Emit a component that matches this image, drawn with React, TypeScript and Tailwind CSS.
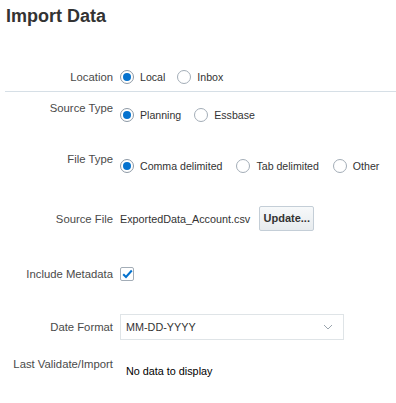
import React from "react";

const font = { fontFamily: '"Liberation Sans", Arial, sans-serif' };

function Radio({ checked, label }: { checked?: boolean; label: string }) {
  return (
    <div className="flex items-center whitespace-nowrap">
      <span
        className={
          "flex h-[14px] w-[14px] shrink-0 items-center justify-center rounded-full border bg-white " +
          (checked ? "border-[#8d99a5]" : "border-[#a3adb7]")
        }
      >
        {checked && <span className="h-[8px] w-[8px] rounded-full bg-[#0572ce]" />}
      </span>
      <span className="ml-[6px] text-[10.6px] leading-[16px] text-[#333333]">{label}</span>
    </div>
  );
}

function Label({ children }: { children: React.ReactNode }) {
  return (
    <div className="w-[113px] shrink-0 whitespace-nowrap text-right text-[11.3px] leading-[16px] text-[#4a4a4a]">
      {children}
    </div>
  );
}

export default function App() {
  return (
    <div className="h-[403px] w-[396px] bg-white" style={font}>
      <div className="pl-[6px] pt-[7px] text-[18px] font-bold leading-[18px] text-[#333333]">
        Import Data
      </div>

      {/* Location */}
      <div className="mt-[44px] flex h-[16px] items-center">
        <Label>Location</Label>
        <div className="ml-[7px] flex items-center gap-[12px]">
          <Radio checked label="Local" />
          <Radio label="Inbox" />
        </div>
      </div>

      <div className="ml-[5px] mt-[6px] h-px bg-[#d6dfe6]" />

      {/* Source Type */}
      <div className="mt-[8px] flex items-start">
        <Label>Source Type</Label>
        <div className="ml-[7px] mt-[8px] flex h-[14px] items-center gap-[13px]">
          <Radio checked label="Planning" />
          <Radio label="Essbase" />
        </div>
      </div>

      {/* File Type */}
      <div className="mt-[29px] flex items-start">
        <Label>File Type</Label>
        <div className="ml-[7px] mt-[8px] flex h-[14px] items-center gap-[14px]">
          <Radio checked label="Comma delimited" />
          <Radio label="Tab delimited" />
          <Radio label="Other" />
        </div>
      </div>

      {/* Source File */}
      <div className="mt-[33px] flex h-[25px] items-center">
        <Label>Source File</Label>
        <div className="ml-[7px] whitespace-nowrap text-[10.8px] leading-[16px] text-[#333333]">
          ExportedData_Account.csv
        </div>
        <button className="ml-[9px] flex h-[25px] w-[55px] items-center justify-center rounded-[2px] border border-[#c4ced7] bg-gradient-to-b from-[#f7f9fa] to-[#e7ebee] text-[11px] font-bold text-[#333333]">
          Update...
        </button>
      </div>

      {/* Include Metadata */}
      <div className="mt-[36px] flex h-[14px] items-center">
        <Label>Include Metadata</Label>
        <span className="ml-[7px] flex h-[14px] w-[14px] items-center justify-center rounded-[2px] border border-[#a3adb7] bg-white">
          <svg width="11" height="10" viewBox="0 0 11 10">
            <path d="M1.2 5.2 L4 8 L9.8 1.5" fill="none" stroke="#0572ce" strokeWidth="2" />
          </svg>
        </span>
      </div>

      {/* Date Format */}
      <div className="mt-[33px] flex h-[26px] items-center">
        <Label>Date Format</Label>
        <div className="ml-[7px] flex h-[26px] w-[224px] items-center justify-between border border-[#dfe4e7] bg-white pl-[5px] pr-[10px]">
          <span className="text-[10.8px] leading-[16px] text-[#333333]">MM-DD-YYYY</span>
          <svg width="10" height="6" viewBox="0 0 10 6">
            <path d="M1 1 L5 5 L9 1" fill="none" stroke="#9aa4ad" strokeWidth="1" />
          </svg>
        </div>
      </div>

      {/* Last Validate/Import */}
      <div className="mt-[16px] flex items-start">
        <Label>Last Validate/Import</Label>
        <div className="ml-[13px] mt-[7px] whitespace-nowrap text-[10.8px] leading-[16px] text-[#000000]">
          No data to display
        </div>
      </div>
    </div>
  );
}
